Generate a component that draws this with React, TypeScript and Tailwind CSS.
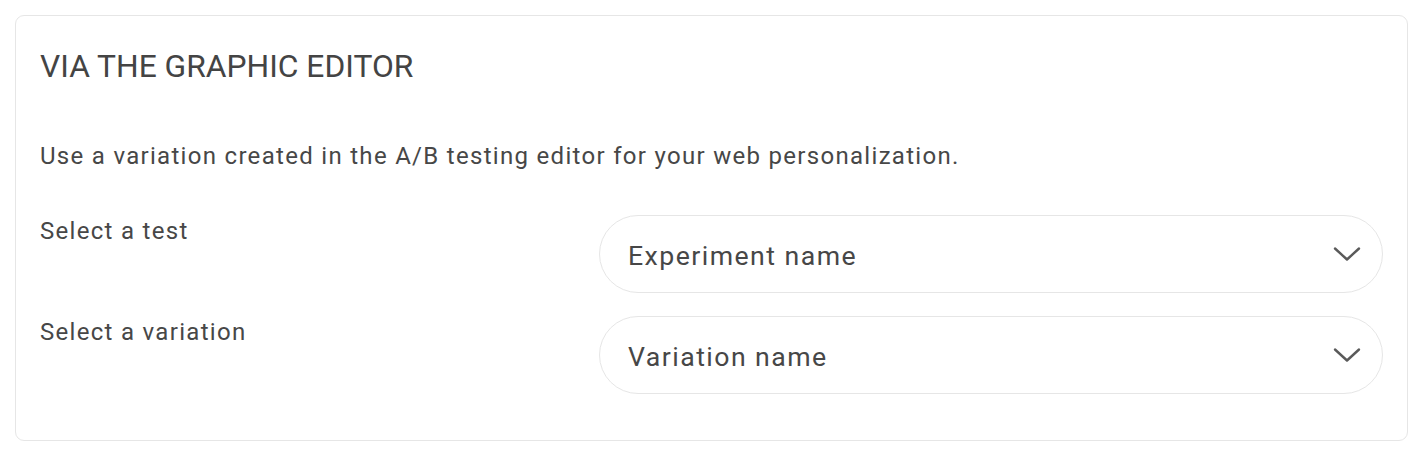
import React from "react";

function Chevron() {
  return (
    <svg width="28" height="16" viewBox="0 0 28 16" fill="none" className="shrink-0">
      <path d="M2 2.5 L14 13.5 L26 2.5" stroke="#5a5a5a" strokeWidth="2.4" strokeLinecap="round" strokeLinejoin="round" />
    </svg>
  );
}

function Select({ value }: { value: string }) {
  return (
    <div className="flex-1 h-[78px] rounded-[39px] border border-[#e6e6e6] bg-white flex items-center justify-between pl-[28px] pr-[21px]">
      <span className="text-[26.67px] tracking-[1.45px] text-[#474747] leading-none pt-[5px]">{value}</span>
      <Chevron />
    </div>
  );
}

export default function App() {
  return (
    <div className="w-[1415px] h-[452px] bg-white p-[15px] pr-[7px] pb-[11px]" style={{ fontFamily: "Roboto, 'Noto Sans', sans-serif" }}>
      <div className="w-[1393px] h-[426px] border border-[#e6e6e6] rounded-[9px] bg-white px-[24px] pt-[32px]">
        <h2 className="text-[31.75px] leading-[38px] text-[#444444] font-normal">VIA THE GRAPHIC EDITOR</h2>
        <p className="mt-[52px] text-[24px] leading-[36px] tracking-[1.3px] text-[#474747]">
          Use a variation created in the A/B testing editor for your web personalization.
        </p>
        <div className="mt-[41px] flex flex-col gap-[23px]">
          <div className="flex">
            <div className="w-[559px] text-[24px] leading-[30px] tracking-[1.3px] text-[#474747] pt-[1px]">Select a test</div>
            <Select value="Experiment name" />
          </div>
          <div className="flex">
            <div className="w-[559px] text-[24px] leading-[30px] tracking-[1.3px] text-[#474747] pt-[1px]">Select a variation</div>
            <Select value="Variation name" />
          </div>
        </div>
      </div>
    </div>
  );
}
